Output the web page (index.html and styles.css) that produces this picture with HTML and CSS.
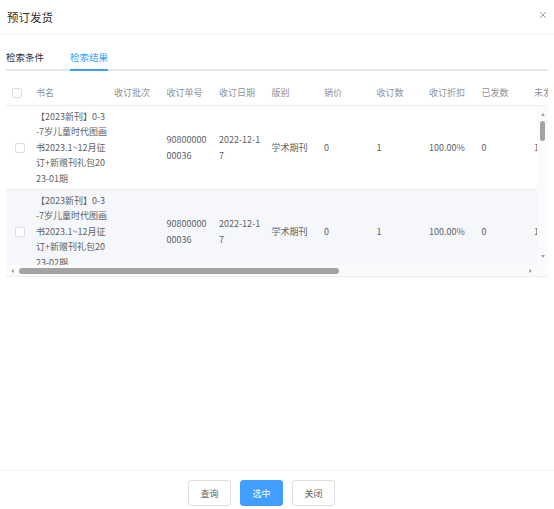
FILE: index.html
```html
<!DOCTYPE html>
<html lang="zh-CN">
<head>
    <meta charset="UTF-8">
    <meta name="viewport" content="width=device-width, initial-scale=1.0">
    <title>预订发货</title>
    <link rel="stylesheet" href="styles.css">
</head>
<body>
    <div class="dialog">
        <div class="dialog-header">
            <span class="dialog-title">预订发货</span>
            <svg class="close" width="8" height="8" viewBox="0 0 8 8">
                <path d="M1 1L7 7M7 1L1 7" stroke="#a0a3a8" stroke-width="1" fill="none"/>
            </svg>
        </div>

        <div class="dialog-body">
            <div class="tabs">
                <div class="tab">检索条件</div>
                <div class="tab active">检索结果</div>
            </div>

            <div class="table">
                <div class="table-head">
                    <div class="cell cell-check"><span class="checkbox"></span></div>
                    <div class="cell">书名</div>
                    <div class="cell">收订批次</div>
                    <div class="cell">收订单号</div>
                    <div class="cell">收订日期</div>
                    <div class="cell">版别</div>
                    <div class="cell">销价</div>
                    <div class="cell">收订数</div>
                    <div class="cell">收订折扣</div>
                    <div class="cell">已发数</div>
                    <div class="cell">未发数</div>
                    <div class="cell">操作员</div>
                </div>

                <div class="table-body">
                    <div class="viewport">
                        <div class="row">
                            <div class="cell cell-check"><span class="checkbox"></span></div>
                            <div class="cell lines">【2023新刊】0-3<br>-7岁儿童时代图画<br>书2023.1~12月征<br>订+新赠刊礼包20<br>23-01期</div>
                            <div class="cell"></div>
                            <div class="cell lines">90800000<br>00036</div>
                            <div class="cell lines">2022-12-1<br>7</div>
                            <div class="cell">学术期刊</div>
                            <div class="cell">0</div>
                            <div class="cell">1</div>
                            <div class="cell">100.00%</div>
                            <div class="cell">0</div>
                            <div class="cell">1</div>
                            <div class="cell"></div>
                        </div>
                        <div class="row hover">
                            <div class="cell cell-check"><span class="checkbox"></span></div>
                            <div class="cell lines">【2023新刊】0-3<br>-7岁儿童时代图画<br>书2023.1~12月征<br>订+新赠刊礼包20<br>23-02期</div>
                            <div class="cell"></div>
                            <div class="cell lines">90800000<br>00036</div>
                            <div class="cell lines">2022-12-1<br>7</div>
                            <div class="cell">学术期刊</div>
                            <div class="cell">0</div>
                            <div class="cell">1</div>
                            <div class="cell">100.00%</div>
                            <div class="cell">0</div>
                            <div class="cell">1</div>
                            <div class="cell"></div>
                        </div>
                    </div>

                    <div class="vbar">
                        <span class="arrow arrow-up"></span>
                        <span class="thumb thumb-v"></span>
                        <span class="spacer"></span>
                        <span class="arrow arrow-down"></span>
                    </div>
                    <div class="hbar">
                        <span class="arrow arrow-left"></span>
                        <span class="thumb thumb-h"></span>
                        <span class="spacer"></span>
                        <span class="arrow arrow-right"></span>
                    </div>
                    <div class="corner"></div>
                </div>
            </div>
        </div>

        <div class="dialog-footer">
            <button class="btn">查询</button>
            <button class="btn btn-primary">选中</button>
            <button class="btn">关闭</button>
        </div>
    </div>
</body>
</html>
```

FILE: styles.css
```css
body {
    margin: 0;
    background: #fff;
    font-family: "Noto Sans CJK SC", "Noto Sans", sans-serif;
    color: #606266;
}

.dialog {
    height: 100vh;
    display: flex;
    flex-direction: column;
}

.dialog-header {
    height: 34px;
    border-bottom: 1px solid #f2f3f5;
    display: flex;
    align-items: center;
    justify-content: space-between;
    padding: 0 7px 0 7px;
}

.dialog-title {
    font-size: 11.5px;
    color: #303133;
}

.close {
    margin-top: -4px;
}

.dialog-body {
    flex: 1;
    padding: 0 6px;
}

/* tabs */
.tabs {
    display: flex;
    padding-top: 10px;
    border-bottom: 2px solid #e4e7ed;
}

.tab {
    position: relative;
    height: 24px;
    line-height: 24px;
    padding: 0 13px;
    font-size: 9.5px;
    color: #303133;
}

.tab:first-child {
    padding-left: 0;
}

.tab.active {
    color: #409eff;
}

.tab.active::after {
    content: "";
    position: absolute;
    left: 13px;
    right: 13px;
    bottom: -2px;
    height: 2px;
    background: #409eff;
}

/* table */
.table {
    margin-top: 9px;
    border-bottom: 1px solid #ebeef5;
    overflow: hidden;
}

.table-head,
.row {
    display: grid;
    grid-template-columns: 22px 78px repeat(10, 52.5px);
    align-items: center;
}

.table-head {
    height: 25px;
    border-bottom: 1px solid #ebeef5;
    color: #909399;
}

.cell {
    padding-left: 8px;
    font-size: 9px;
    white-space: nowrap;
}

.cell-check {
    padding-left: 6px;
    display: flex;
}

.row .cell-check {
    padding-left: 9px;
}

.lines {
    line-height: 15.5px;
}

.checkbox {
    width: 8px;
    height: 8px;
    border: 1px solid #dcdfe6;
    border-radius: 2px;
    background: #fff;
}

.table-body {
    display: grid;
    grid-template-columns: 1fr 11px;
    grid-template-rows: 159px 11px;
}

.viewport {
    overflow: hidden;
}

.row {
    height: 83px;
    border-bottom: 1px solid #ebeef5;
    background: #fff;
}

.row.hover {
    background: #f5f7fa;
}

/* scrollbars */
.vbar,
.hbar,
.corner {
    background: #fbfbfb;
    display: flex;
    align-items: center;
}

.vbar {
    flex-direction: column;
    padding: 7px 0 7px;
}

.hbar {
    padding: 0 5px 0 5px;
}

.spacer {
    flex: 1;
}

.thumb {
    background: #a3a3a3;
    border-radius: 3px;
}

.thumb-v {
    width: 5px;
    height: 20px;
    margin-top: 5px;
}

.thumb-h {
    width: 320px;
    height: 6px;
    margin-left: 5px;
}

.arrow {
    width: 0;
    height: 0;
    border: 2.5px solid transparent;
}

.arrow-up {
    border-top: 0;
    border-bottom: 3px solid #a3a3a3;
}

.arrow-down {
    border-bottom: 0;
    border-top: 3px solid #a3a3a3;
}

.arrow-left {
    border-left: 0;
    border-right: 3px solid #a3a3a3;
}

.arrow-right {
    border-right: 0;
    border-left: 3px solid #a3a3a3;
}

/* footer */
.dialog-footer {
    border-top: 1px solid #f2f3f5;
    display: flex;
    justify-content: center;
    gap: 9px;
    padding: 9px 31px 3px 0;
}

.btn {
    width: 43px;
    height: 26px;
    padding: 0;
    border: 1px solid #dcdfe6;
    border-radius: 3px;
    background: #fff;
    color: #606266;
    font-family: inherit;
    font-size: 9px;
}

.btn-primary {
    background: #409eff;
    border-color: #409eff;
    color: #fff;
}
```
